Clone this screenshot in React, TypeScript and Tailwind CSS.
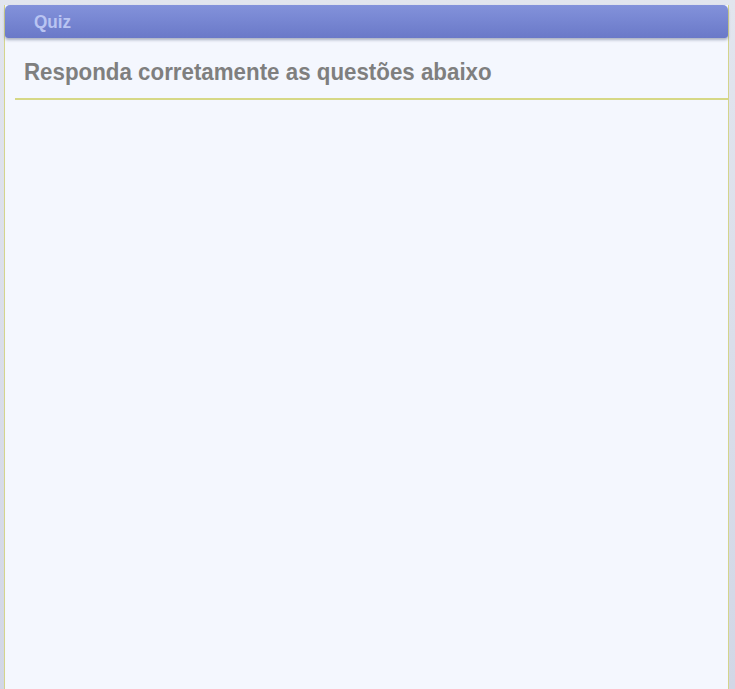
import React from "react";

export default function App() {
  return (
    <div className="w-[735px] h-[689px] overflow-hidden bg-gradient-to-b from-[#e2e5ee] to-[#d2d7e6] pt-[5px] pl-[4px] pr-[6px]">
      <div className="relative h-[684px] w-[725px] bg-[#f4f7fe] border-x border-[#d3d48c]">
        <div className="absolute left-0 top-0 w-[723px] h-[33px] rounded-t-[5px] rounded-b-[3px] bg-gradient-to-b from-[#8392db] to-[#6a79c8] shadow-[0_2px_3px_rgba(80,90,120,0.45)] pl-[29px] flex items-center">
          <span className="inline-block origin-left scale-x-[0.9] text-[#b9c4f2] font-bold text-[19px] leading-none font-['Liberation_Sans',sans-serif]">Quiz</span>
        </div>
        <div className="pt-[55px] pl-[19px]">
          <div className="origin-left scale-x-[0.93] whitespace-nowrap text-[#7f7f7f] font-bold text-[24px] leading-none font-['Liberation_Sans',sans-serif]">
            Responda corretamente as questões abaixo
          </div>
        </div>
        <div className="ml-[10px] mt-[14px] h-[2px] bg-[#d6d886]" />
      </div>
    </div>
  );
}
